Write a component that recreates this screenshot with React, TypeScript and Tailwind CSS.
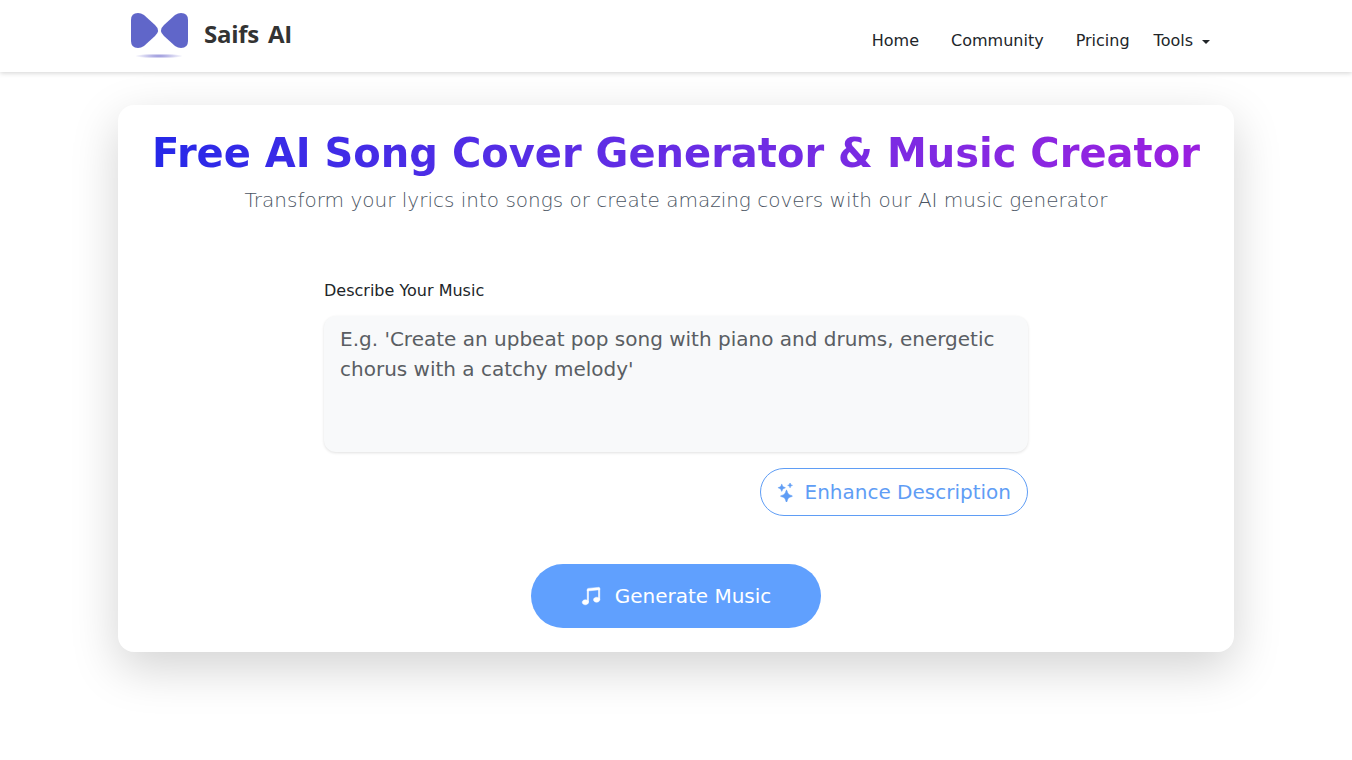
import { BsMusicNoteBeamed, BsStars } from "react-icons/bs";

function Logo() {
  return (
    <div className="flex items-center gap-[16px]">
      <svg width="57" height="46" viewBox="0 0 57 46">
        <defs>
          <radialGradient id="logo-shadow">
            <stop offset="0%" stopColor="#8f8cd8" />
            <stop offset="100%" stopColor="#8f8cd8" stopOpacity="0" />
          </radialGradient>
        </defs>
        <path
          d="M0 7Q0 0 7 0Q10 0 13 2L24 12Q30 17.500 24 23L13 33Q10 35 7 35Q0 35 0 28Z"
          fill="#6066c9"
        />
        <path
          d="M57 7Q57 0 50 0Q47 0 44 2L33 12Q27 17.500 33 23L44 33Q47 35 50 35Q57 35 57 28Z"
          fill="#6066c9"
        />
        <ellipse cx="28" cy="43" rx="24" ry="2.500" fill="url(#logo-shadow)" />
      </svg>
      <span className="mb-[5px] text-[24px] font-bold leading-none text-[#333333] font-['Open_Sans',sans-serif] tracking-[-0.25px] [word-spacing:3px]">
        Saifs AI
      </span>
    </div>
  );
}

export default function App() {
  return (
    <div className="min-h-screen bg-white font-['DejaVu_Sans',sans-serif]">
      <nav className="h-[72px] bg-white shadow-[0_1px_5px_rgba(0,0,0,0.18)]">
        <div className="flex h-full items-start justify-between pl-[131px] pr-[142px]">
          <div className="pt-[13px]">
            <Logo />
          </div>
          <div className="flex items-center pt-[29px] text-[16px] leading-[24px] text-[#212529]">
            <a className="mr-[32px]">Home</a>
            <a className="mr-[32px]">Community</a>
            <a className="mr-[24px]">Pricing</a>
            <a className="flex items-center">
              Tools
              <span className="ml-[9px] mt-[2px] border-x-[4px] border-t-[4px] border-x-transparent border-t-[#212529]" />
            </a>
          </div>
        </div>
      </nav>

      <main className="flex justify-center pt-[33px]">
        <section className="h-[547px] w-[1116px] rounded-[16px] bg-white pt-[22px] shadow-[0_16px_48px_rgba(0,0,0,0.175)]">
          <h1 className="mx-auto w-fit bg-gradient-to-r from-[#2528e8] to-[#9a1fe0] bg-clip-text text-center text-[40px] font-bold leading-[52px] text-transparent">
            Free AI Song Cover Generator &amp; Music Creator
          </h1>
          <p className="mt-[6px] text-center text-[20px] font-extralight leading-[30px] text-[#4b5563]">
            Transform your lyrics into songs or create amazing covers with our AI music generator
          </p>

          <div className="mx-auto mt-[64px] w-[704px]">
            <label className="block text-[16px] leading-[24px] text-[#212529]">Describe Your Music</label>
            <div className="mt-[13px] h-[136px] rounded-[12px] bg-[#f8f9fa] px-[16px] py-[8px] text-[20px] leading-[30px] text-[#5a5e63] shadow-[0_1px_3px_rgba(0,0,0,0.12)]">
              E.g. 'Create an upbeat pop song with piano and drums, energetic chorus with a catchy melody'
            </div>
            <div className="mt-[16px] flex justify-end">
              <button className="flex h-[48px] items-center gap-[9px] rounded-full border border-[#5f9df5] bg-white px-[16px] text-[20px] text-[#5f9df5]">
                <BsStars size={19} stroke="currentColor" strokeWidth={0.4} />
                Enhance Description
              </button>
            </div>
          </div>

          <div className="mt-[48px] flex justify-center">
            <button className="flex h-[64px] w-[290px] items-center justify-center gap-[14px] rounded-full bg-[#60a0fe] text-[20px] text-white">
              <BsMusicNoteBeamed size={20} stroke="currentColor" strokeWidth={0.4} />
              Generate Music
            </button>
          </div>
        </section>
      </main>
    </div>
  );
}
